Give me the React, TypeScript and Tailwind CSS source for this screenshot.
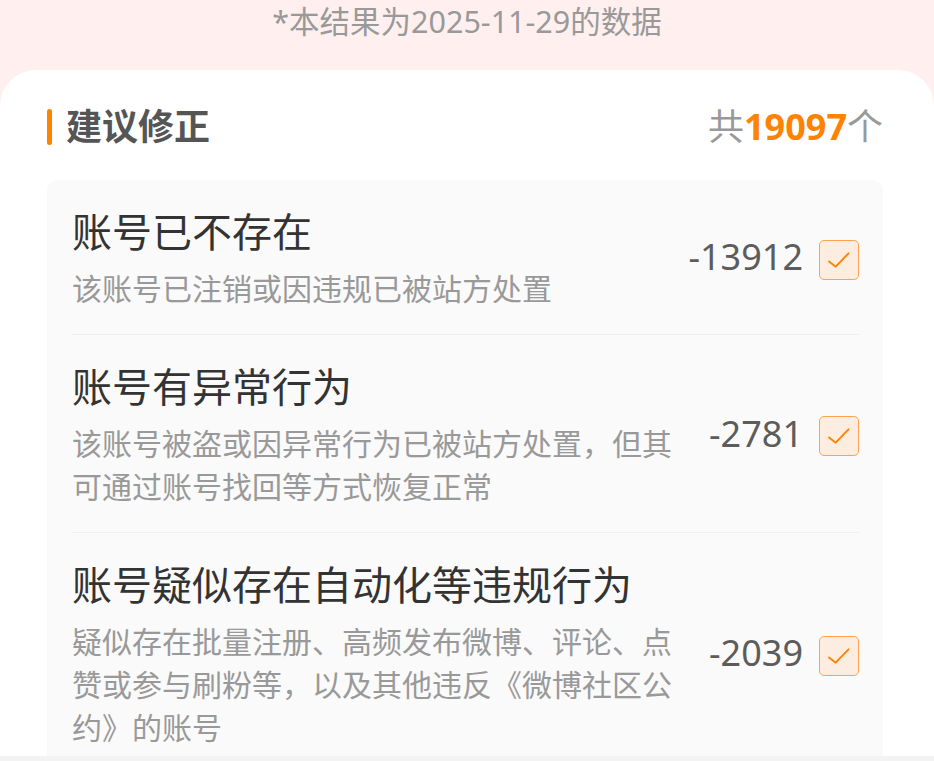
import React from 'react';

type Item = {
  title: string;
  desc: string;
  count: number;
};

const items: Item[] = [
  {
    title: '账号已不存在',
    desc: '该账号已注销或因违规已被站方处置',
    count: -13912,
  },
  {
    title: '账号有异常行为',
    desc: '该账号被盗或因异常行为已被站方处置，但其可通过账号找回等方式恢复正常',
    count: -2781,
  },
  {
    title: '账号疑似存在自动化等违规行为',
    desc: '疑似存在批量注册、高频发布微博、评论、点赞或参与刷粉等，以及其他违反《微博社区公约》的账号',
    count: -2039,
  },
];

const CheckBox: React.FC = () => (
  <div className="w-10 h-10 mt-[5px] shrink-0 rounded-[5px] border border-[#ffa352] bg-[#fdede1] flex items-center justify-center">
    <svg width="40" height="40" viewBox="0 0 40 40" fill="none">
      <path d="M9.5 21.5 L16.5 27 L30 13" stroke="#ff8200" strokeWidth="2" strokeLinecap="round" strokeLinejoin="round" />
    </svg>
  </div>
);

const App: React.FC = () => {
  return (
    <div
      className="min-h-screen bg-[#fff0ef] overflow-hidden"
      style={{ fontFamily: '"Noto Sans", "Noto Sans CJK SC", sans-serif' }}
    >
      {/* data date */}
      <div className="h-[43px] flex items-center justify-center text-[30.5px] text-[#999999]">
        *本结果为2025-11-29的数据
      </div>

      <div className="mt-[27px] bg-white rounded-t-[36px] pl-[47px] pr-[51px] pt-[39px]">
        {/* header */}
        <div className="h-9 flex items-center justify-between">
          <div className="flex items-center h-full">
            <span className="w-[5px] h-9 rounded-full bg-[#ff8200]" />
            <span className="ml-[14px] text-[36px] font-bold text-[#555555] leading-none">建议修正</span>
          </div>
          <div className="text-[36px] text-[#999999] leading-none">
            共<span className="font-bold text-[#ff8200]">19097</span>个
          </div>
        </div>

        {/* list */}
        <div className="mt-[35px] bg-[#fafafa] rounded-[10px] pl-[25px] pr-6">
          {items.map((item, i) => (
            <div
              key={i}
              className={`flex items-center gap-6 py-6 ${i < items.length - 1 ? 'border-b border-[#efefef]' : ''}`}
            >
              <div className="flex-1 min-w-0">
                <div className="text-[40px] leading-[56px] text-[#333333]">{item.title}</div>
                <div className="mt-[7px] text-[30px] leading-[43px] text-[#999999]">{item.desc}</div>
              </div>
              <div className="flex items-center gap-4 shrink-0">
                <span className="text-[36px] text-[#5c5c5c]">{item.count}</span>
                <CheckBox />
              </div>
            </div>
          ))}
        </div>
      </div>

      <div className="fixed inset-x-0 bottom-0 h-[5px] bg-[#f3f3f3]" />
    </div>
  );
};

export default App;
